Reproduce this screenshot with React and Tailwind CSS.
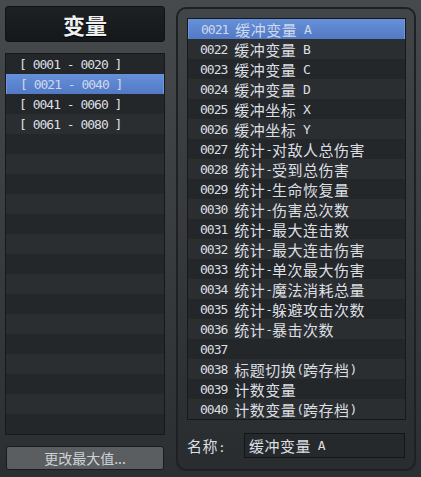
import React from "react";

const CJK = /([\u3000-\u9fff\uff00-\uffef]+)/;

// mono for latin/digits, wide CJK font for hanzi runs
function Mixed({ text }) {
  return text.split(CJK).map((part, i) => {
    if (!part) return null;
    if (CJK.test(part)) {
      return (
        <span key={i} className="font-['Noto_Sans_CJK_SC',sans-serif] text-[15px] tracking-[0.5px]">
          {part}
        </span>
      );
    }
    return (
      <span key={i} className="font-['DejaVu_Sans_Mono',monospace] text-[13px] tracking-[-1px] whitespace-pre">
        {part}
      </span>
    );
  });
}

const ranges = ["[ 0001 - 0020 ]", "[ 0021 - 0040 ]", "[ 0041 - 0060 ]", "[ 0061 - 0080 ]"];

const vars = [
  "缓冲变量 A",
  "缓冲变量 B",
  "缓冲变量 C",
  "缓冲变量 D",
  "缓冲坐标 X",
  "缓冲坐标 Y",
  "统计-对敌人总伤害",
  "统计-受到总伤害",
  "统计-生命恢复量",
  "统计-伤害总次数",
  "统计-最大连击数",
  "统计-最大连击伤害",
  "统计-单次最大伤害",
  "统计-魔法消耗总量",
  "统计-躲避攻击次数",
  "统计-暴击次数",
  "",
  "标题切换(跨存档)",
  "计数变量",
  "计数变量(跨存档)",
];

function Row({ index, selected, children, pad }) {
  const zebra = index % 2 === 0 ? "bg-[#24272a]" : "bg-[#2b2e31]";
  return (
    <div
      className={`h-5 flex items-center leading-none ${pad} ${
        selected
          ? "bg-gradient-to-b from-[#6690da] to-[#5279c4] border-x border-[#7097dc] text-[#cdd8ec]"
          : `${zebra} text-[#dcdfe2]`
      }`}
    >
      {children}
    </div>
  );
}

export default function App() {
  const leftRows = Array.from({ length: 19 }, (_, i) => ranges[i] || null);

  return (
    <div className="w-[421px] h-[477px] bg-gradient-to-b from-[#474a4d] to-[#2c2f32] flex gap-[11px] pl-[5px] pt-[6px] overflow-hidden">
      {/* left column */}
      <div className="w-40 flex flex-col">
        <div className="h-9 rounded-[3px] border border-[#101214] bg-gradient-to-b from-[#1e2124] to-[#15181b] flex items-center justify-center">
          <span className="font-['Noto_Sans_CJK_SC',sans-serif] font-bold text-[22px] leading-none text-[#eef0f2] [text-shadow:0_1px_1px_#000]">
            变量
          </span>
        </div>

        <div className="mt-[11px] border border-[#16181a] bg-[#24272a]">
          {leftRows.map((r, i) => (
            <Row key={i} index={i} selected={i === 1} pad="pl-[13px]">
              {r && <Mixed text={r} />}
            </Row>
          ))}
        </div>

        <div className="mt-[11px] mx-px h-6 rounded-[3px] border border-[#1a1c1e] bg-[#5b5e61] flex items-center justify-center text-[#cfd2d5]">
          <span className="font-['Noto_Sans_CJK_SC',sans-serif] text-[14px] leading-none">更改最大值...</span>
        </div>
      </div>

      {/* right panel */}
      <div className="mt-px w-[240px] h-[464px] rounded-[10px] border-2 border-[#1e2124] bg-black/5 pl-[9px] pr-[8px] pt-[9px]">
        <div className="border border-[#16181a] bg-[#24272a]">
          {vars.map((v, i) => (
            <Row key={i} index={i} selected={i === 0} pad="pl-3">
              <Mixed text={`00${21 + i} `} />
              {v && <Mixed text={v} />}
            </Row>
          ))}
        </div>

        <div className="mt-[13px] flex items-center text-[#dcdfe2]">
          <div className="w-[57px] leading-none">
            <Mixed text="名称: " />
          </div>
          <div className="w-[161px] h-[25px] border border-[#131517] bg-[#26292c] flex items-center pl-[4px] leading-none">
            <Mixed text="缓冲变量 A" />
          </div>
        </div>
      </div>
    </div>
  );
}
